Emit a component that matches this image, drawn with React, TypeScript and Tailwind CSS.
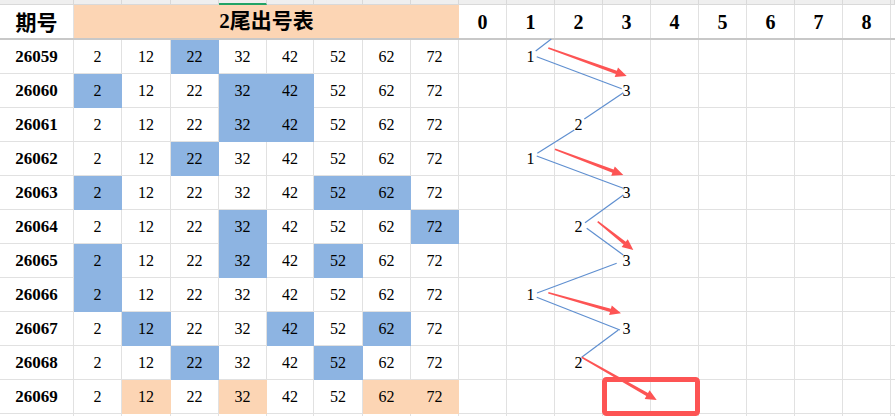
import clsx from 'clsx'

type Row = {
    id: string
    hl: number[]
    v: number | null
    next?: boolean
}

const NUMS = [2, 12, 22, 32, 42, 52, 62, 72]
const DIGITS = [0, 1, 2, 3, 4, 5, 6, 7, 8]

const ROWS: Row[] = [
    { id: '26059', hl: [22], v: 1 },
    { id: '26060', hl: [2, 32, 42], v: 3 },
    { id: '26061', hl: [32, 42], v: 2 },
    { id: '26062', hl: [22], v: 1 },
    { id: '26063', hl: [2, 52, 62], v: 3 },
    { id: '26064', hl: [32, 72], v: 2 },
    { id: '26065', hl: [2, 32, 52], v: 3 },
    { id: '26066', hl: [2], v: 1 },
    { id: '26067', hl: [12, 42, 62], v: 3 },
    { id: '26068', hl: [22, 52], v: 2 },
    { id: '26069', hl: [12, 32, 62, 72], v: null, next: true },
]

// zig-zag connectors between the chart values
const LINES: [number, number, number, number][] = [
    [535.7, 51, 551.3, 39],
    [536.7, 56.7, 621.7, 88.7],
    [623.3, 92.7, 584.3, 119],
    [574.3, 130, 537.3, 153.3],
    [536.7, 156, 623.3, 188.3],
    [623.3, 195, 585, 222.7],
    [586.7, 228.3, 623.3, 255],
    [616.7, 263.3, 537, 293],
    [536.7, 297.3, 620, 330],
    [618.3, 330, 581.7, 357.3],
]

const ARROWS: [number, number, number, number][] = [
    [548.3, 48, 626.7, 76],
    [555, 149.3, 623.3, 175],
    [597.7, 221.7, 633.3, 250],
    [548.3, 292.7, 621, 313.3],
    [581.7, 357.3, 656.7, 400],
]

const GRID =
    'grid grid-cols-[74px_48px_49px_48px_48px_47px_49px_48px_48px_48px_48px_48px_48px_48px_48px_48px_48px_48px_1fr]'

const LINE = 'border-[#e1e1e1]'

function arrowPoints(x1: number, y1: number, x2: number, y2: number) {
    const dx = x2 - x1
    const dy = y2 - y1
    const len = Math.hypot(dx, dy)
    const ux = dx / len
    const uy = dy / len
    const nx = -uy
    const ny = ux
    const headLen = 11
    const headHalf = 5
    const w0 = 0.8
    const w1 = 1.7
    const bx = x2 - ux * headLen
    const by = y2 - uy * headLen
    const pts = [
        [x1 + nx * w0, y1 + ny * w0],
        [bx + nx * w1, by + ny * w1],
        [bx + nx * headHalf, by + ny * headHalf],
        [x2, y2],
        [bx - nx * headHalf, by - ny * headHalf],
        [bx - nx * w1, by - ny * w1],
        [x1 - nx * w0, y1 - ny * w0],
    ]
    return pts.map(p => `${p[0].toFixed(1)},${p[1].toFixed(1)}`).join(' ')
}

function NumCell({ n, hl, last }: { n: number; hl: boolean; last: boolean }) {
    return (
        <div
            className={clsx(
                'flex h-full items-center justify-center border-r border-b text-[16px]',
                hl && !last && 'bg-[#8db4e2] border-[#8db4e2]',
                hl && last && 'bg-[#fcd5b4] border-[#fcd5b4]',
                !hl && LINE
            )}
        >
            {n}
        </div>
    )
}

function DataRow({ row }: { row: Row }) {
    return (
        <div className={clsx(GRID, 'h-[34px]')}>
            <div className={clsx('flex h-full items-center justify-center border-r border-b text-[17px] font-bold', LINE)}>
                {row.id}
            </div>
            {NUMS.map(n => (
                <NumCell key={n} n={n} hl={row.hl.includes(n)} last={!!row.next} />
            ))}
            {DIGITS.map(d => (
                <div key={d} className={clsx('flex h-full items-center justify-center border-r border-b text-[16px]', LINE)}>
                    {row.v === d ? d : ''}
                </div>
            ))}
            <div className={clsx('h-full border-b', LINE)} />
        </div>
    )
}

export default function App() {
    return (
        <div className="relative h-[416px] w-[895px] overflow-hidden bg-white font-['Liberation_Serif',serif] text-black">
            {/* Column header strip */}
            <div className={clsx(GRID, 'h-[5px] bg-[#efefef]')}>
                {Array.from({ length: 19 }).map((_, i) => (
                    <div
                        key={i}
                        className={clsx(
                            'h-full border-r border-[#d9d9d9]',
                            i === 4 ? 'border-b-2 border-b-[#21a366]' : 'border-b'
                        )}
                    />
                ))}
            </div>

            {/* Title row */}
            <div className={clsx(GRID, 'h-[35px] border-b-2 border-[#c8c8c8]')}>
                <div className={clsx("flex h-full items-center justify-center border-r font-['Noto_Sans_CJK_SC',sans-serif] text-[21px] font-bold", LINE)}>
                    期号
                </div>
                <div className="col-span-8 flex h-full items-center justify-center bg-[#fcd5b4] font-['Liberation_Serif','Noto_Sans_CJK_SC',sans-serif] text-[21px] font-bold">
                    2尾出号表
                </div>
                {DIGITS.map(d => (
                    <div key={d} className={clsx('flex h-full items-center justify-center border-r text-[20px] font-bold', LINE)}>
                        {d}
                    </div>
                ))}
                <div />
            </div>

            {ROWS.map(r => (
                <DataRow key={r.id} row={r} />
            ))}

            <div className={clsx(GRID, 'h-[10px]')}>
                {Array.from({ length: 19 }).map((_, i) => (
                    <div key={i} className={clsx('h-full border-r', LINE)} />
                ))}
            </div>

            {/* Trend chart overlay */}
            <svg
                className="pointer-events-none absolute top-0 left-0"
                width={895}
                height={416}
                viewBox="0 0 895 416"
            >
                {LINES.map(([x1, y1, x2, y2], i) => (
                    <line key={i} x1={x1} y1={y1} x2={x2} y2={y2} stroke="#5f8fd0" strokeWidth={1.2} />
                ))}
                {ARROWS.map(([x1, y1, x2, y2], i) => (
                    <polygon key={i} points={arrowPoints(x1, y1, x2, y2)} fill="#fd5454" />
                ))}
                <rect x={604.5} y={379.5} width={93} height={34} rx={2} fill="none" stroke="#fd5454" strokeWidth={5} />
            </svg>
        </div>
    )
}
